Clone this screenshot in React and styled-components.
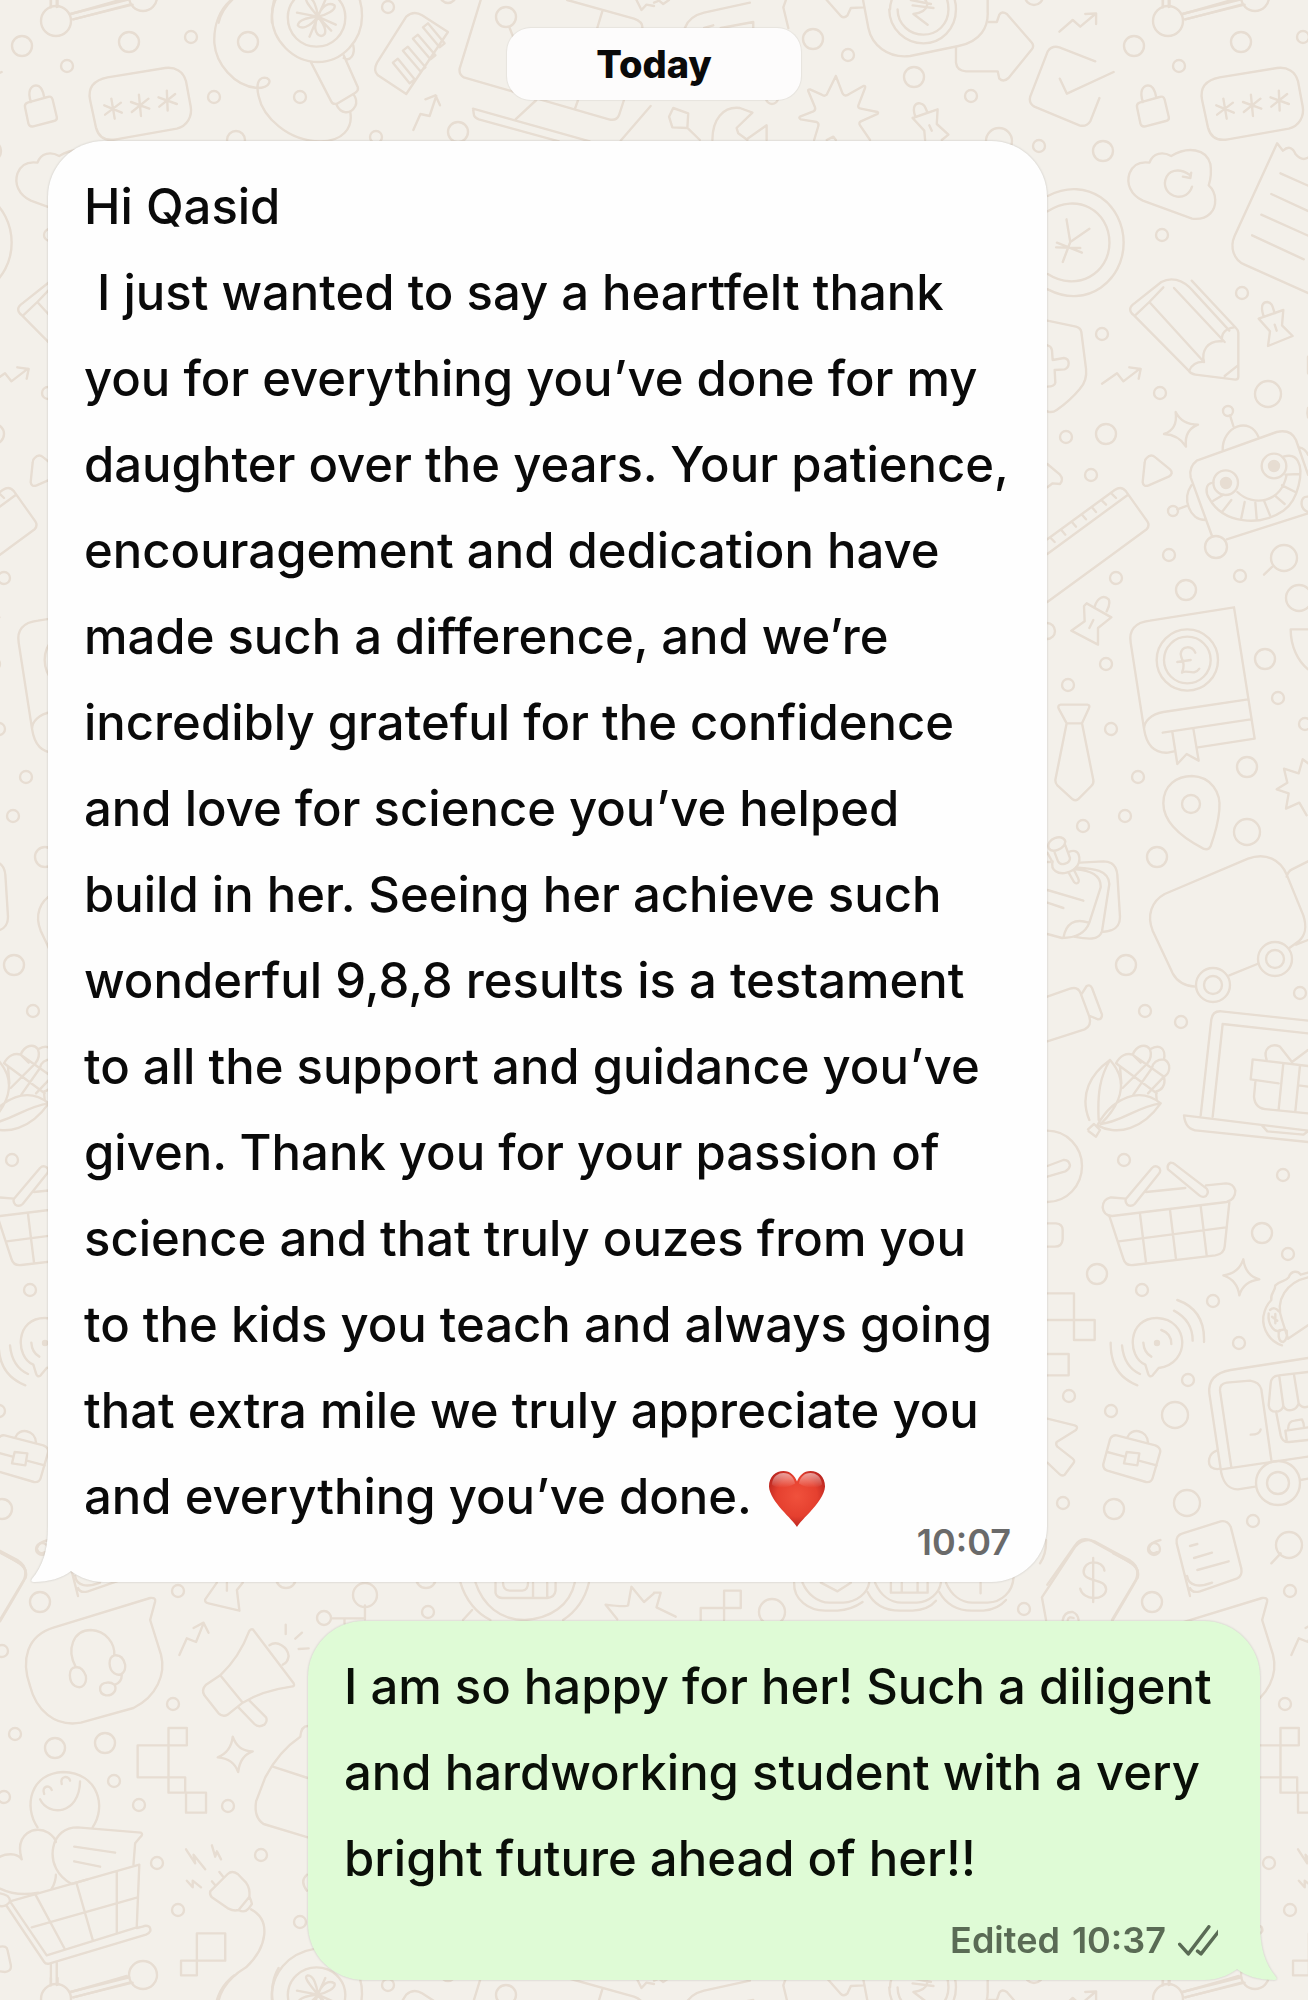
import React from 'react';
import styled, { createGlobalStyle, css } from 'styled-components';

const GlobalStyle = createGlobalStyle`
    * {
        box-sizing: border-box;
    }

    body {
        margin: 0;
        background: #f3f0ea;
        color: #0a0a0a;
        font-family: Inter, "Liberation Sans", sans-serif;
    }
`;

const Chat = styled.main`
    position: relative;
    isolation: isolate;
    display: flex;
    flex-direction: column;
    align-items: flex-start;
    min-height: 100vh;
    padding: 28px 48px 20px;
    overflow: hidden;
`;

const Wallpaper = styled.svg`
    position: absolute;
    inset: 0;
    z-index: -1;
    width: 100%;
    height: 100%;
`;

const DateChip = styled.time`
    align-self: center;
    min-width: 294px;
    margin-bottom: 41px;
    padding: 0 24px;
    border-radius: 24px;
    background: #fdfcfc;
    box-shadow: 0 0 1px 1px rgba(0, 0, 0, 0.05);
    font-size: 38px;
    font-weight: 800;
    line-height: 72px;
    text-align: center;
`;

const Bubble = styled.article`
    position: relative;
    max-width: 100%;
    padding: 23px 24px 20px 36px;
    border-radius: 56px;
    filter: drop-shadow(0 0 1px rgba(0, 0, 0, 0.18));

    ${({ $outgoing }) =>
        $outgoing
            ? css`
                  align-self: flex-end;
                  width: 952px;
                  margin-top: 39px;
                  background: #dffbd6;
                  color: #0a0f08;
              `
            : css`
                  width: 999px;
                  background: #fefefe;
              `}
`;

const Text = styled.p`
    display: flow-root;
    margin: 0;
    font-size: 49px;
    font-weight: 550;
    line-height: 86px;
    white-space: pre-wrap;
`;

/* floats beside the last line, or under it when there is no room left */
const Meta = styled.span`
    float: right;
    display: flex;
    align-items: center;
    gap: 12px;
    margin-top: ${({ $outgoing }) => ($outgoing ? '18px' : '68px')};
    margin-right: 12px;
    color: ${({ $outgoing }) => ($outgoing ? '#5a6b55' : '#6a6a6a')};
    font-size: 36px;
    font-weight: 600;
    line-height: 40px;
`;

const Ticks = styled.svg`
    flex: none;
    width: 46px;
    height: 31px;
`;

const Heart = styled.svg`
    width: 58px;
    height: 58px;
    margin-left: 4px;
    vertical-align: -14px;
`;

const TailShape = styled.svg`
    position: absolute;
    bottom: 0;
    width: 60px;
    height: 70px;
    ${({ $outgoing }) =>
        $outgoing
            ? css`
                  right: -18px;
                  transform: scaleX(-1);
                  fill: #dffbd6;
              `
            : css`
                  left: -18px;
                  fill: #fefefe;
              `}
`;

const TILE_W = 1112;
const TILE_H = 1978;

// x, y, radius
const DOTS = [
    [22, 46, 10], [129, 42, 10], [191, 37, 6], [248, 42, 10], [67, 66, 6], [214, 97, 6],
    [300, 97, 6], [388, 7, 6], [506, 17, 10], [458, 132, 10], [236, 140, 9], [376, 137, 6],
    [56, 21, 15], [143, -3, 14], [448, -5, 8],
    [813, 39, 10], [848, 55, 6], [914, 77, 10], [971, 96, 6], [772, 98, 6], [1034, -4, 9],
    [1039, 146, 6], [1103, 151, 10], [999, 141, 13], [1162, 235, 6], [1242, 293, 6],
    [1102, 334, 6], [1160, 393, 6], [1268, 394, 13], [1106, 434, 10], [1066, 437, 6],
    [1091, 475, 6], [1169, 555, 6], [1116, 578, 6], [1186, 590, 10], [1240, 576, 6],
    [1284, 558, 13], [1299, 598, 13], [1047, 631, 8], [1265, 659, 10], [1106, 664, 6],
    [1068, 685, 6], [1278, 698, 6], [1216, 547, 11], [1228, 411, 5], [1173, 511, 5],
    [1111, 729, 6], [1138, 777, 6], [1247, 767, 10], [1125, 816, 6], [1083, 826, 6],
    [1247, 832, 13], [1157, 857, 10], [1191, 804, 9], [1126, 965, 10], [1145, 1011, 6],
    [1181, 1022, 6], [1300, 993, 6], [1305, 724, 6], [1213, 985, 17], [1213, 985, 9],
    [1275, 959, 17], [1275, 959, 9],
    [1124, 1160, 6], [1283, 1175, 6], [1262, 1233, 10], [1288, 1254, 6], [1097, 1274, 10],
    [1142, 1290, 6], [1213, 1301, 6], [1239, 1343, 6], [1188, 1380, 6], [1069, 1396, 6],
    [1111, 1411, 6], [1175, 1415, 13], [1063, 1503, 6], [1114, 1509, 10], [1187, 1503, 13],
    [1253, 1521, 6], [1154, 1549, 6], [1289, 1545, 13], [1278, 1483, 22], [1278, 1483, 11],
    [40, 1602, 10], [178, 1591, 6], [173, 1704, 6], [15, 1734, 6], [55, 1748, 10],
    [105, 1743, 10], [114, 1781, 6], [4, 1797, 6], [139, 1805, 6], [228, 1806, 6],
    [261, 1855, 6], [157, 1863, 6], [178, 1910, 6], [300, 1922, 6], [428, 1612, 6],
    [365, 1595, 12], [324, 1618, 7], [286, 1578, 10], [426, 1578, 10], [2, 1651, 6],
    [772, 1612, 13], [1024, 1609, 6],
];

const Group = ({ x, y, sx = 1 / 3, sy = 1 / 3, d }) => (
    <g transform={`translate(${x} ${y}) scale(${sx} ${sy})`}>
        {d.map((path) => (
            <path key={path} d={path} vectorEffect="non-scaling-stroke" />
        ))}
    </g>
);

const WIDE = 1 / 2.3976;

const TOP_LEFT = [
    // molecule rods
    'M122 0V22M138 0V20M168 42L310 -2M175 58L318 14',
    // padlock
    'M66 308Q58 312 60 322L68 370Q71 382 80 379L129 363Q138 360 136 350L126 298Q123 287 114 291ZM74 306C66 276 72 258 86 256C100 256 104 276 106 293',
    // password
    'M258 232L396 204C420 200 440 214 446 244L457 318C462 350 448 378 424 386L278 418C252 424 236 410 230 382L216 300C210 262 226 240 258 232Z',
    'M267 296L275 356M250 316L292 338M290 308L252 344M333 284L338 348M314 306L358 326M356 296L316 336M400 272L402 332M380 292L424 312M420 282L382 320',
    // hose and magnifier
    'M562 -8C524 26 512 80 514 130C518 190 560 258 616 264C650 264 654 234 634 233C618 234 614 256 620 288C630 350 690 424 768 424C822 424 846 384 840 338',
    'M652 48C652 120 702 186 762 186C822 186 868 120 868 48C868 20 862 -10 852 -30M652 48C652 20 658 -10 668 -30M690 52C690 104 722 140 759 140C796 140 828 104 828 52C828 4 796 -32 759 -32C722 -32 690 4 690 52Z',
    'M746 188L794 304Q798 314 808 311L852 278Q860 272 858 262L824 166M806 312C816 342 840 346 852 318Q858 302 848 284M824 174C840 186 852 164 847 136',
    'M762 50C742 18 726 -4 738 -8C752 -8 760 24 762 50C772 16 788 6 802 16C806 30 784 44 762 50C782 80 786 104 770 108C754 104 752 76 762 50C742 82 722 90 714 76C716 60 740 52 762 50M762 50L780 0M762 50L805 74M762 50L742 110M762 50L712 38M762 50L794 92',
    // document
    'M974 50Q992 30 1012 46L1074 96L974 282L906 226Q894 212 904 188ZM1014 82L1026 70L1066 130L1054 142ZM990 116L1002 104L1044 166L1032 178ZM966 152L978 140L1020 202L1008 214ZM942 188L954 176L994 238L982 250Z',
    'M991 390L1008 342L1030 348L1046 288M1020 298L1044 286L1055 316',
    // monitor
    'M1154 -6L1102 206Q1100 224 1112 232L1460 358Q1478 364 1484 346L1496 300M1222 84L1230 110M1360 0L1520 56Q1542 66 1540 84M1444 34L1432 84M1386 300L1378 328M1286 300L1236 358',
    'M1134 326L1136 342Q1136 352 1148 358L1340 424M1134 326L1414 424M1488 422L1560 318',
    'M1526 0L1538 30L1550 14L1568 18',
];

const TOP_RIGHT = [
    'M0 8L12 2L22 12L36 0M74 84C82 56 100 44 120 38L230 8M120 84L142 76M160 84L238 66V84M318 -6L310 22L322 84',
    // rupee note
    'M414 0L448 48Q456 56 464 46L472 24L502 22M500 -8L514 84C522 134 560 176 614 168L730 138C784 124 802 80 800 34L800 -8',
    'M564 28C564 88 604 130 646 130C688 130 724 88 724 28C724 -12 708 -40 690 -50M584 28C584 74 614 104 646 104C678 104 706 74 706 28C706 -12 690 -36 670 -44M566 28C566 -4 578 -24 590 -40',
    'M616 0L664 12M620 16L670 24M636 -10C664 0 662 36 622 42L656 74',
    'M802 66H822L828 44Q834 32 846 42L906 128Q912 138 906 148L850 234Q838 248 828 236L824 214H748Q726 212 724 188V142',
    'M972 95L1004 60L1022 80L1058 42M1034 42L1060 40L1060 72',
    // checkbox
    'M1058 184L972 142Q954 136 944 154L902 290Q898 310 912 320L1020 376Q1036 382 1046 364L1068 294M973 236L990 281L1102 216',
    // burst
    'M436 228L452 280Q458 292 468 282L502 258Q508 256 506 264L490 316Q488 324 496 326L536 336Q540 340 532 344L496 364Q490 368 494 376L518 420M436 228L414 284Q408 290 402 284L374 268Q368 268 370 274L386 322Q388 330 382 334L350 350Q346 354 352 358L390 366Q396 370 394 378L384 420M414 420L430 410L436 420',
    // tools
    'M46 324L82 340L80 384L44 382L36 350ZM82 386L110 420M140 420C140 358 166 318 206 324L236 338L198 384L202 400L224 420M224 416L270 376V420',
    // pin
    'M626 348C618 318 628 308 638 310C648 312 650 320 655 336M620 354L680 328L678 372L706 404L690 420M620 354L648 392L650 420M660 376L666 392',
    // cloud
    'M1188 488C1196 458 1220 454 1240 468C1280 438 1324 446 1334 492Q1338 524 1330 556C1350 578 1350 620 1334 640Q1318 660 1290 656L1172 602C1142 584 1132 550 1140 520C1148 494 1166 484 1188 488Z',
    'M1290 560C1284 584 1268 592 1254 590C1230 584 1222 560 1226 540C1232 510 1258 502 1284 524M1288 518L1286 534L1268 530',
    // yen coin
    'M944 588C1040 526 1126 614 1126 728C1126 840 1040 930 944 868M944 634C1014 576 1092 632 1092 728C1092 820 1014 878 944 822',
    'M989 658L998 726L980 786M998 726L1044 686M966 728L1026 758M964 742L1022 744',
    // receipt
    'M1570 880L1416 794C1390 780 1380 742 1392 708L1494 430L1508 452C1522 436 1532 444 1538 462C1550 480 1560 480 1570 472M1502 520L1570 558M1480 582L1570 634M1456 644L1570 708M1434 706L1558 778',
];

const RIGHT_UPPER = [
    // pencil
    'M628 92L520 -26C486 -66 450 -68 424 -54L346 8C326 20 326 34 342 46L506 212Q512 222 526 224L646 239Q655 238 655 230V98Q654 90 648 84L515 -58M348 44L388 6L552 186M388 6L430 -38M462 -36L614 126M552 186C544 156 560 120 606 124C602 98 620 84 642 82M552 186C530 184 514 196 508 212M614 228L654 196',
    // pin
    'M730 46C720 14 730 6 742 6C758 8 758 22 764 40M716 56L790 30L786 76L818 108L744 138L750 94ZM764 74L770 92',
    // shield
    'M82 62L168 80Q182 84 184 96L198 206Q202 242 180 266Q150 302 110 330Q96 340 82 334M82 136Q94 138 96 152L98 180L132 174Q146 176 146 190Q146 204 134 208L104 210L106 248Q104 260 82 260',
    'M246 251L291 220L310 244L360 206M328 202L362 207L356 236',
    'M467 336Q486 374 534 374Q492 390 498 440Q476 404 432 402Q474 388 467 336Z',
    'M380 474Q392 460 406 472L450 508Q462 520 446 530L386 556Q370 562 368 546L374 488Q374 478 380 474Z',
    'M82 492L120 524Q132 538 120 552L98 550L82 562',
    // ruler
    'M82 718L284 570Q304 556 318 574L382 664Q390 676 380 688L82 906M82 762L322 586M92 714L104 726M124 690L136 704M156 666L168 680M186 644L198 658M216 622L228 636M246 602L258 614M276 582L288 594',
    // robot
    'M576 708L512 532Q506 500 530 482L770 396Q812 386 828 420L864 524M620 718L864 640M608 450C606 380 690 346 716 412M640 378L630 346M514 556C486 596 508 660 556 660M472 628L504 616M838 442Q856 446 864 464M864 590C842 588 838 618 856 632L864 636',
    'M580 548C552 550 558 582 568 596C610 672 720 680 790 632C838 600 850 510 834 484Q822 460 790 470M652 576C700 622 784 608 800 524M796 524L840 522M786 556L826 576M764 586L794 612M732 602L750 646M706 608L710 656M674 606L664 654M634 600L606 636M610 584L580 602',
    'M580 548A37 37 0 1 1 654 548A37 37 0 1 1 580 548M725 498A37 37 0 1 1 799 498A37 37 0 1 1 725 498',
    'M757 800L732 824M864 170V220M864 324Q860 340 864 352',
    // pin
    'M224 920C232 892 252 884 266 898Q272 912 260 934M200 910L274 952L234 984V1034L154 992L194 964L192 918ZM220 960L208 984',
    // book with pound coin
    'M642 922L390 962C344 968 326 990 332 1028L372 1286C380 1340 408 1360 444 1358L462 1354M642 922L704 1316L534 1342M684 1198L430 1236C392 1242 372 1266 372 1286M692 1258L428 1298M457 1296L472 1392L500 1362L536 1382L520 1286',
    'M410 1080A92 92 0 1 1 594 1080A92 92 0 1 1 410 1080M432 1080A70 70 0 1 1 572 1080A70 70 0 1 1 432 1080M526 1058C516 1036 486 1036 482 1062C484 1082 498 1088 486 1118C500 1106 522 1130 538 1106M472 1086L512 1080',
    'M864 988H812C812 1040 834 1084 864 1108',
];

const RIGHT_MIDDLE = [
    // tie
    'M122 14H202Q212 16 206 26L186 70H140L116 26Q112 16 122 14ZM140 70L106 240Q106 250 112 256L158 298Q166 304 174 298L214 258Q222 250 220 240L186 70',
    'M864 190L848 178L836 220L792 206L802 248L770 268L806 280L798 326L838 308L860 346',
    // map pin
    'M430 310C430 256 470 228 516 228C572 230 604 276 598 330C594 376 582 410 572 438Q566 452 550 446C500 420 430 374 430 310Z',
    // notes and pushpin
    'M86 444C76 418 128 398 136 424C134 446 98 462 86 444ZM104 458L114 484C124 500 150 490 150 474L136 436M98 484C90 512 116 524 140 518C170 510 184 488 176 464C172 452 160 450 146 456M146 518L162 546C172 556 180 546 174 534L162 510',
    'M180 488L250 484C278 484 290 502 292 524L300 650C300 680 284 694 246 696M168 502C222 506 266 510 268 552L246 694C236 722 204 718 160 710M166 508C210 510 244 526 242 562L208 668C196 700 164 714 126 714L82 702M82 570L190 602M82 608L130 624M130 714C138 670 164 654 206 668M82 486L92 486M82 458L94 480',
    // car
    'M526 860C490 858 470 842 458 820L398 692C380 646 394 604 434 582L684 476C738 456 782 480 800 524L850 646C862 684 856 706 836 724L808 744M628 826L712 792M800 530Q804 514 816 508L864 484M828 734L864 720',
    // bottle
    'M82 890L150 866Q174 858 182 880L208 950Q216 978 194 988L82 1024M186 880L200 858Q210 852 216 864L246 944Q246 958 234 958L210 948',
    // corn
    'M236 1260C232 1180 240 1130 270 1080C214 1120 176 1182 208 1260M270 1080C316 1130 320 1196 242 1272M232 1276C280 1190 360 1160 422 1210C370 1284 296 1310 232 1276ZM242 1272C310 1264 350 1220 422 1210M204 1288L222 1272L240 1290L228 1310L206 1294',
    'M288 1090C300 1066 320 1058 338 1064C350 1034 378 1030 390 1048C420 1030 438 1046 432 1078C456 1090 450 1120 432 1130C438 1156 424 1172 408 1174L410 1200M288 1090L410 1180M338 1064L432 1130M300 1100L304 1150M390 1048Q398 1070 382 1090L308 1164M432 1078Q400 1078 396 1104L340 1184M338 1064L362 1088M432 1130L384 1180',
    // laptop with gift
    'M542 1246L574 958Q578 932 604 934L864 962M578 1250L608 972L864 1000M864 1292L492 1246Q496 1290 534 1292L864 1326M726 1276L742 1294L850 1304L864 1294',
    'M698 1078L864 1098M698 1078L692 1138L776 1150M706 1146L702 1190C704 1216 720 1228 744 1228L864 1240M790 1090L776 1228M840 1096L826 1234M836 1156L864 1160M740 1080C728 1046 752 1028 780 1040L816 1086L864 1050',
];

const RIGHT_LOWER = [
    'M82 92C140 92 186 140 186 198C186 258 140 306 82 306M82 198L130 180Q146 178 150 196Q148 208 136 214L82 230M82 370H108Q128 372 128 390V418Q126 440 104 440H82',
    // basket
    'M318 296L272 292Q248 298 248 322Q250 346 276 348L620 306Q646 298 646 272Q640 250 618 250L558 256M378 276L496 264M318 296L396 204Q406 194 418 204Q424 214 416 222L344 312Q334 322 322 314Q314 306 318 296ZM444 208Q440 194 452 188Q460 188 466 194L560 266Q568 278 558 288Q548 294 538 286Z',
    'M268 348L310 476Q316 498 340 495L586 466Q612 462 614 440L628 308M360 342L378 488M450 330L468 478M542 318L560 466M296 424L618 382',
    'M670 478Q676 526 718 538Q670 544 658 586Q652 540 610 526Q656 520 670 478Z',
    // squares
    'M82 580H162V660H82M162 660H224V720H162ZM82 762H146V826H82',
    // ringing bubble
    'M376 794C320 770 322 652 412 654C508 658 514 790 416 804L398 826Q388 834 384 820ZM424 690Q454 700 454 732M370 728Q372 758 394 770M462 632Q518 662 518 722M472 600Q556 630 552 726M306 736Q312 800 360 822M272 728Q270 824 352 856',
    // taco
    'M864 532C800 546 764 600 786 660L804 716M786 736C752 726 726 690 730 650C734 626 744 610 754 600C750 580 766 576 766 556C782 540 796 546 806 532C814 510 834 512 842 524L864 518M804 716L864 676M746 640C742 676 766 700 780 690M776 696Q774 726 790 726Q804 718 800 692Q788 684 776 696M750 630Q764 618 776 634M766 642V670M756 650L772 662',
    // briefcase
    'M290 1006L406 1036Q424 1044 420 1058L398 1134Q394 1148 378 1146L262 1112Q248 1106 250 1092L270 1018Q276 1004 290 1006ZM262 1056L314 1070M356 1082L410 1096M320 1056L358 1060L352 1096L312 1090ZM322 1012C332 982 382 988 384 1028',
    // food van
    'M864 774L632 810C586 818 564 840 568 880L604 1120C612 1152 626 1168 654 1168L706 1160M634 1102L600 872Q598 852 620 848L690 842Q718 846 724 868L754 1080M604 1108L864 1070M692 1004Q720 1004 722 988M590 1052C564 1062 562 1090 574 1102Q586 1110 602 1106M842 1140L864 1136',
    'M864 816L776 826Q754 828 752 850L746 916C750 942 784 940 790 918C800 938 828 934 836 910Q846 926 864 920M778 830L790 918M822 824L836 910M768 934L782 1006Q788 1028 808 1026L864 1020M798 992L864 982M800 1020L796 992M804 990Q804 962 824 962L846 958Q852 968 852 984',
    'M82 956L164 976Q176 980 168 990L110 1026Q106 1032 112 1040L158 1076Q166 1082 160 1090L134 1124Q126 1130 118 1122L82 1088',
    // price tag
    'M82 1454L164 1338Q180 1310 210 1320L336 1390Q358 1406 352 1434M60 1390Q80 1360 78 1320',
    // list
    'M510 1488L470 1330Q466 1306 488 1300L602 1264Q622 1260 632 1280L664 1406Q668 1428 650 1436L540 1474Q516 1480 510 1464M510 1338L532 1332M522 1374L576 1358M532 1410L626 1384M782 1360L754 1390',
];

const BOTTOM_LEFT = [
    'M0 38C40 64 68 78 62 110Q58 122 0 244M116 0Q92 6 88 26Q94 46 108 36M180 108C184 140 210 142 240 128',
    // headset bubble
    'M130 262L360 174Q374 172 372 184L360 240L386 344C398 402 376 470 320 504L194 548C130 562 86 508 72 438C50 360 64 286 130 262Z',
    'M182 382C158 328 176 270 218 270C254 272 276 310 274 346M182 382C162 380 164 426 180 438C198 450 208 430 206 408C200 388 192 380 182 382ZM274 346C258 352 260 388 274 400C290 412 302 396 300 374C296 352 286 344 274 346ZM292 404C292 422 284 430 276 434M256 428C236 430 234 460 254 466C272 468 282 448 274 434Q266 426 256 428',
    'M430 345L448 295L470 306L488 250M464 264L488 248L500 278',
    // pin
    'M520 128L492 178Q490 188 500 190L574 212L568 150L582 128M544 128V152',
    // megaphone
    'M606 268L704 430Q708 440 698 440Q630 452 582 488L546 524Q534 532 524 520L490 466Q482 450 494 434L528 406Q574 352 598 272Q602 266 606 268ZM528 406L582 488M646 316C664 300 690 320 692 348Q690 368 678 374M570 500L610 552Q620 564 634 554Q642 544 638 532L598 482M685 254V282M724 278L708 296M716 327L740 325',
    // circuit
    'M875 196V238M794 235H875M826 238V250',
    // squares
    'M404 564H448V616H404ZM330 616H404V712H330ZM404 712H444V758H404ZM446 758H494V818H446ZM472 1180H540V1262H472ZM434 1262H472V1306H434Z',
    'M558 590Q570 634 606 634Q576 646 571 696Q560 656 522 652Q554 636 558 590Z',
    // flask
    'M738 558Q722 558 720 590Q668 634 636 712L614 784Q608 832 632 852L738 892M654 680L738 714M736 1004Q718 1024 736 1052',
    // smiley
    'M90 862C56 800 72 700 152 696C236 700 256 800 222 862M96 778C116 830 190 826 192 724M106 762C98 738 120 732 124 750M148 732C142 706 166 706 168 722',
    // heart, card and cart
    'M52 958C34 880 84 854 116 878C132 892 134 906 134 906M52 958C40 936 12 942 0 950M134 1004Q134 1024 124 1046M0 1046Q40 1070 92 1058M172 1032C138 1010 120 966 128 920C134 884 156 862 186 862L338 878Q344 884 336 892L324 910L320 974M178 920L276 938M178 964L240 980M172 1032L210 1018',
    'M24 1084L334 974L328 1158M24 1084L112 1246L328 1162M0 1060Q24 1064 24 1084Q14 1102 0 1098M16 1098L106 1266Q110 1274 120 1270L350 1184Q366 1176 358 1160Q350 1154 342 1160L328 1164M86 1066L154 1224M184 1032L222 1198M280 994V1178M76 1162L330 1072',
    'M122 1274V1335M136 1268V1335M170 1356L304 1308M176 1372L310 1328M0 1220Q16 1216 18 1230L26 1276Q28 1294 12 1296L0 1294',
    // plug
    'M446 928L468 970L464 944L492 988M508 916L516 950L520 934L530 958M448 1022L462 1042L462 1022L482 1042M526 996L536 1012M508 1024L516 1036M504 1054L546 1002Q556 990 570 1002L590 1028Q600 1044 598 1070L572 1110Q560 1114 548 1106L508 1072Q502 1064 504 1054ZM572 1110Q586 1120 596 1106L604 1092Q602 1080 598 1070',
    'M602 1108C650 1140 642 1220 590 1282C550 1312 530 1350 524 1382',
    'M652 1382C648 1300 690 1240 756 1226',
    // coin behind the bubble edge
    'M1104 128C1116 180 1144 222 1176 240M1140 128C1158 196 1200 240 1258 240C1320 236 1366 196 1378 128M1412 128Q1398 200 1350 240M1110 240L1132 210M1188 128V158Q1190 172 1204 174H1312Q1330 172 1332 152V128M1206 128Q1206 150 1222 152H1252Q1266 150 1266 128M1278 128V172M1312 128V172',
    'M1568 160L1544 186L1514 140L1506 196Q1500 202 1452 194L1480 238',
];

const BOTTOM_RIGHT = [
    'M0 158L16 158L6 202L52 230M168 152H208V204H168ZM112 240V204H168V240',
    // coins
    'M356 128C368 162 392 188 420 188H454C486 186 512 160 516 128M336 128C334 180 372 212 410 212H440C466 210 484 200 500 186M400 128L440 154L472 128',
    'M530 128C542 162 564 188 594 188H630C660 186 684 160 688 128M512 156C526 192 554 212 590 212H620C646 210 664 200 676 182M568 128V158H656V128M594 128V158M632 128V158',
    'M700 128C712 162 734 188 764 188H800C834 186 860 156 862 112M684 156C700 192 726 212 762 212H790C810 210 830 200 844 180M783 128V160',
    // dollar tag
    'M940 240L930 172L1010 20Q1030 -8 1056 4L1142 62Q1166 80 1156 118L1098 240M1053 54V186M1080 92C1076 58 1030 58 1030 96C1032 128 1084 114 1084 148C1082 184 1028 182 1022 146M980 240Q984 214 1004 216Q1016 222 1018 240M992 240Q994 228 1006 234',
];

const Background = () => (
    <Wallpaper aria-hidden="true">
        <defs>
            <g id="doodles" fill="none" stroke="#e7ddd2" strokeWidth="2.4" strokeLinecap="round" strokeLinejoin="round">
                {DOTS.map(([cx, cy, r]) => (
                    <circle key={`${cx}-${cy}-${r}`} cx={cx} cy={cy} r={r} />
                ))}
                <circle cx="1226" cy="483" r="5" fill="#e7ddd2" />
                <circle cx="1274" cy="466" r="5" fill="#e7ddd2" />
                <circle cx="1157" cy="1343" r="2" fill="#e7ddd2" />
                <Group x={0} y={0} sx={WIDE} d={TOP_LEFT} />
                <Group x={654} y={0} sx={WIDE} d={TOP_RIGHT} />
                <Group x={1020} y={300} d={RIGHT_UPPER} />
                <Group x={1020} y={700} d={RIGHT_MIDDLE} />
                <Group x={1020} y={1100} d={RIGHT_LOWER} />
                <Group x={0} y={1540} sx={WIDE} d={BOTTOM_LEFT} />
                <Group x={654} y={1540} sx={WIDE} d={BOTTOM_RIGHT} />
            </g>
            {/* each copy wraps drawings that cross an edge of the tile */}
            <pattern id="tile" width={TILE_W} height={TILE_H} patternUnits="userSpaceOnUse">
                {[-TILE_W, 0].map((x) =>
                    [-TILE_H, 0, TILE_H].map((y) => <use key={`${x}${y}`} href="#doodles" x={x} y={y} />)
                )}
            </pattern>
        </defs>
        <rect width="100%" height="100%" fill="url(#tile)" />
    </Wallpaper>
);

const Tail = ({ outgoing }) => (
    <TailShape $outgoing={outgoing} viewBox="0 0 60 70" aria-hidden="true">
        <path d="M18 0V14C18 38 13 54 2 67Q0 70 4 70C19 70 32 66 41 59L60 50V0Z" />
    </TailShape>
);

const HeartEmoji = () => (
    <Heart viewBox="0 0 60 60" role="img" aria-label="red heart">
        <defs>
            <radialGradient id="heartFill" cx="50%" cy="45%" r="60%">
                <stop offset="0" stopColor="#f0513c" />
                <stop offset="0.6" stopColor="#e5402f" />
                <stop offset="1" stopColor="#b3211d" />
            </radialGradient>
            <linearGradient id="heartShine" x1="0" y1="0" x2="0" y2="1">
                <stop offset="0" stopColor="#fff" stopOpacity="0.55" />
                <stop offset="1" stopColor="#fff" stopOpacity="0" />
            </linearGradient>
        </defs>
        <path
            d="M30 59C26 51 2 33 1 17C1 7 8 1 16 1C23 1 28 6 30 12C32 6 37 1 44 1C52 1 59 7 59 17C58 33 34 51 30 59Z"
            fill="url(#heartFill)"
        />
        <path d="M4 15C5 6 11 3 16 3C23 3 27 8 28 14C20 19 10 20 4 15ZM56 15C55 6 49 3 44 3C37 3 33 8 32 14C40 19 50 20 56 15Z" fill="url(#heartShine)" />
    </Heart>
);

const thanks = [
    'Hi Qasid',
    ' I just wanted to say a heartfelt thank',
    'you for everything you’ve done for my',
    'daughter over the years. Your patience,',
    'encouragement and dedication have',
    'made such a difference, and we’re',
    'incredibly grateful for the confidence',
    'and love for science you’ve helped',
    'build in her. Seeing her achieve such',
    'wonderful 9,8,8 results is a testament',
    'to all the support and guidance you’ve',
    'given. Thank you for your passion of',
    'science and that truly ouzes from you',
    'to the kids you teach and always going',
    'that extra mile we truly appreciate you',
    'and everything you’ve done. ',
];

const reply = [
    'I am so happy for her! Such a diligent',
    'and hardworking student with a very',
    'bright future ahead of her!!',
];

const Lines = ({ lines }) =>
    lines.map((line, i) => (
        <React.Fragment key={line}>
            {i > 0 && <br />}
            <span>{line}</span>
        </React.Fragment>
    ));

const App = () => {
    return (
        <>
            <GlobalStyle />
            <Chat>
                <Background />
                <DateChip>Today</DateChip>
                <Bubble>
                    <Tail />
                    <Text>
                        <Lines lines={thanks} />
                        <HeartEmoji />
                        <Meta>
                            <time>10:07</time>
                        </Meta>
                    </Text>
                </Bubble>
                <Bubble $outgoing>
                    <Tail outgoing />
                    <Text>
                        <Lines lines={reply} />
                        <Meta $outgoing>
                            <span>Edited</span>
                            <time>10:37</time>
                            <Ticks viewBox="0 0 134 90" fill="none" stroke="#5a6b55" strokeWidth="10" strokeLinecap="round" strokeLinejoin="round" role="img" aria-label="delivered">
                                <path d="M5 56L30 84L90 5M57 76L67 84L129 5" />
                            </Ticks>
                        </Meta>
                    </Text>
                </Bubble>
            </Chat>
        </>
    );
};

export default App;
